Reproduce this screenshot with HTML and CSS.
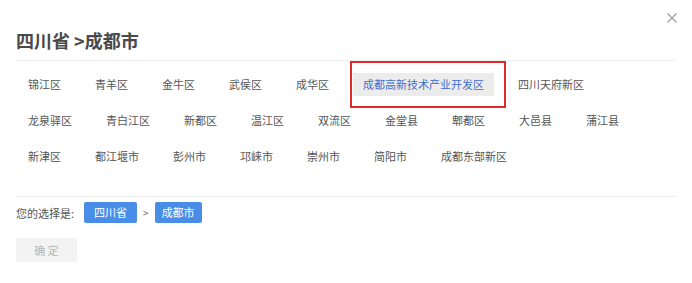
FILE: index.html
```html
<!DOCTYPE html>
<html lang="zh-CN">
<head>
<meta charset="utf-8">
<title>选择地区</title>
<link rel="stylesheet" href="styles.css">
</head>
<body>
<div class="dialog">
  <button class="close" aria-label="关闭">
    <svg width="10" height="10" viewBox="0 0 10 10"><path d="M0.5 0.5L9.5 9.5M9.5 0.5L0.5 9.5" stroke="#9a9a9a" stroke-width="1.1" fill="none"/></svg>
  </button>
  <div class="header"><h2 class="title">四川省 &gt;成都市</h2></div>
  <ul class="areas">
    <li class="area">锦江区</li>
    <li class="area">青羊区</li>
    <li class="area">金牛区</li>
    <li class="area">武侯区</li>
    <li class="area">成华区</li>
    <li class="area active">成都高新技术产业开发区</li>
    <li class="area">四川天府新区</li>
    <li class="area">龙泉驿区</li>
    <li class="area">青白江区</li>
    <li class="area">新都区</li>
    <li class="area">温江区</li>
    <li class="area">双流区</li>
    <li class="area">金堂县</li>
    <li class="area">郫都区</li>
    <li class="area">大邑县</li>
    <li class="area">蒲江县</li>
    <li class="area">新津区</li>
    <li class="area">都江堰市</li>
    <li class="area">彭州市</li>
    <li class="area">邛崃市</li>
    <li class="area">崇州市</li>
    <li class="area">简阳市</li>
    <li class="area">成都东部新区</li>
  </ul>
  <div class="selection">
    <span class="label">您的选择是:</span>
    <span class="tag tag-first">四川省</span>
    <span class="arrow">&gt;</span>
    <span class="tag tag-second">成都市</span>
  </div>
  <button class="confirm">确 定</button>
</div>
</body>
</html>
```

FILE: styles.css
```css
* { box-sizing: border-box; }
html, body { margin: 0; padding: 0; background: #fff; }
body {
  font-family: "Noto Sans CJK SC", "Noto Sans", sans-serif;
  font-size: 11px;
  color: #555;
  width: 692px;
  height: 283px;
  overflow: hidden;
}
.dialog {
  position: relative;
  padding: 0 16px;
}
.close {
  position: absolute;
  top: 13px;
  right: 15px;
  width: 10px;
  height: 10px;
  padding: 0;
  border: 0;
  background: none;
  display: block;
}
.close svg { display: block; }
.header {
  padding: 28px 0 8px;
  border-bottom: 1px solid #ececec;
  margin-right: 1px;
}
.title {
  margin: 0;
  font-size: 18px;
  line-height: 24px;
  font-weight: bold;
  color: #4a4a4a;
}
.areas {
  list-style: none;
  margin: 0;
  padding: 12px 40px 28px 2px;
  display: flex;
  flex-wrap: wrap;
  gap: 13px 14px;
  border-bottom: 1px solid #ececec;
}
.area {
  position: relative;
  height: 23px;
  line-height: 23px;
  padding: 0 10px;
  color: #555;
  white-space: nowrap;
}
.area.active {
  background: #ececec;
  color: #3d6fcc;
}
.area.active::after {
  content: "";
  position: absolute;
  top: -12px;
  left: -3px;
  right: -12px;
  bottom: -12px;
  border: 2px solid #e02a2a;
}
.selection {
  display: flex;
  align-items: center;
  margin-top: 5px;
  height: 21px;
}
.label { color: #555; margin-right: 10px; }
.tag {
  height: 21px;
  line-height: 21px;
  background: #4a8de6;
  color: #fff;
  border-radius: 2px;
}
.tag-first { padding: 0 10px; }
.tag-second { padding: 0 7px; }
.arrow { color: #666; margin: 0 6px; font-size: 10px; }
.confirm {
  display: block;
  margin-top: 15px;
  width: 61px;
  height: 24px;
  border: 0;
  border-radius: 2px;
  background: #f3f3f3;
  color: #b5b5b5;
  font-family: inherit;
  font-size: 11px;
  padding: 0;
}
```
